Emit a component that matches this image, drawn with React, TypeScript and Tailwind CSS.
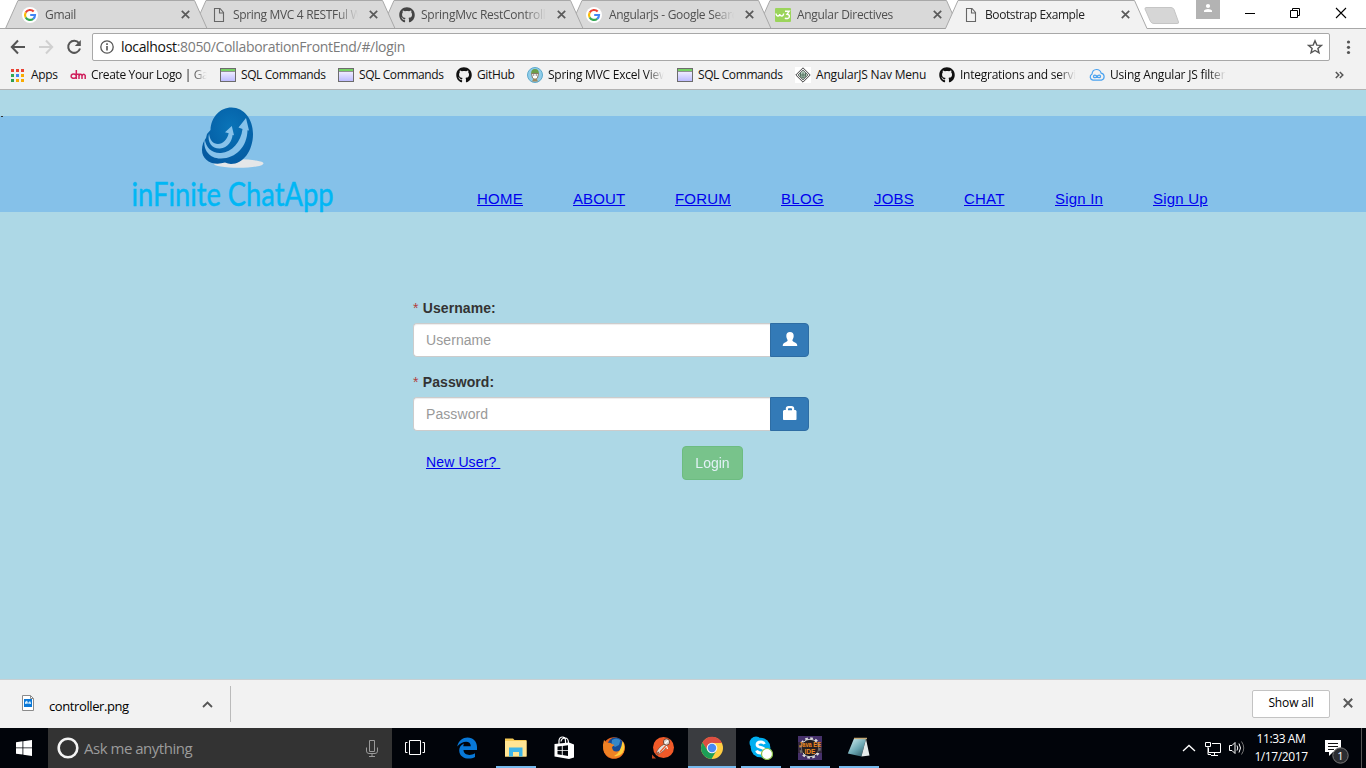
import React from "react";
import { FaGithub } from "react-icons/fa";

const ui = "font-['Open_Sans','Noto_Sans',sans-serif]";

function GoogleIcon() {
  return (
    <svg width="16" height="16" viewBox="0 0 16 16" className="block">
      <circle cx="8" cy="8" r="8" fill="#fff" />
      <g fill="none" strokeWidth="2.2">
        <path d="M11.7 4.6A5 5 0 0 0 3.7 5.5" stroke="#ea4335" />
        <path d="M3.7 5.5A5 5 0 0 0 3.7 10.5" stroke="#fbbc05" />
        <path d="M3.7 10.5A5 5 0 0 0 11.2 11.8" stroke="#34a853" />
        <path d="M11.2 11.8A5 5 0 0 0 13 8H8.2" stroke="#4285f4" />
      </g>
    </svg>
  );
}

function PageIcon() {
  return (
    <svg width="16" height="16" viewBox="0 0 16 16" className="block">
      <path d="M4.5 1.5H10L13.5 5.5V14.5H4.500Z M9.5 1.5V6H13.5" fill="none" stroke="#666" strokeWidth="1.1" />
    </svg>
  );
}

function W3Icon() {
  return (
    <svg width="16" height="16" viewBox="0 0 16 16" className="ml-px block">
      <rect y="1" width="16" height="14" rx="1" fill="#9bd45b" />
      <path d="M1 6.500Q1.300 9 3 9T4.700 7Q5 9 6.700 9T8.600 6.500M10 4.300H14.200L12 7.200Q14.800 7.400 14.300 9.800T9.800 11.200" fill="none" stroke="#fff" strokeWidth="1.400" />
    </svg>
  );
}

function CloseIcon() {
  return (
    <svg width="9" height="9" viewBox="0 0 9 9" className="block">
      <path d="M.8.8L8.2 8.2M8.2.8L.8 8.2" stroke="#5a5a5a" strokeWidth="1.7" />
    </svg>
  );
}

function Tab({ icon, title, active, z, tracking }: { icon: React.ReactNode; title: string; active?: boolean; z: string; tracking: string }) {
  return (
    <div className={`relative h-[29px] w-[188px] shrink-0 ${z}`}>
      <svg width="202" height="29" viewBox="0 0 202 29" className="absolute left-0 top-0 overflow-visible">
        <path d="M-.5 28.5L12 .5H188.5L201 28.5" fill={active ? "#f2f2f2" : "#d9d9d9"} stroke="#a8a8a8" />
        {active ? <path d="M0 28.5H200.5" stroke="#f2f2f2" strokeWidth="1.2" /> : <path d="M-.5 28.5H201" stroke="#a0a0a0" />}
      </svg>
      <div className="relative flex h-[29px] items-center pl-4">
        <div className="w-[17px] shrink-0">{icon}</div>
        <div className={`ml-[6px] w-[129px] shrink-0 overflow-hidden whitespace-pre text-[12px] leading-[18px] [mask-image:linear-gradient(to_right,black_80%,transparent_97%)] ${tracking} ${active ? "text-[#222]" : "text-[#505050]"}`}>
          {title}
        </div>
        <div className="ml-[6.500px] shrink-0"><CloseIcon /></div>
      </div>
    </div>
  );
}

function SqlIcon() {
  return (
    <svg width="16" height="16" viewBox="0 0 16 16" className="block">
      <defs>
        <linearGradient id="sql" x2="0" y2="1"><stop stopColor="#fff" /><stop offset="1" stopColor="#bbb9ff" /></linearGradient>
      </defs>
      <rect x=".5" y="1.5" width="15" height="13" fill="url(#sql)" stroke="#6c6c6c" />
      <path d="M1 3H15" stroke="#55c83c" strokeWidth="1.6" />
      <path d="M1 4.5H15" stroke="#777" strokeWidth=".8" />
    </svg>
  );
}

function AppsIcon() {
  const c = ["#ea4335", "#ea4335", "#ea4335", "#34a853", "#4285f4", "#f9ab00", "#2e9e50", "#f9ab00", "#f9ab00"];
  return (
    <svg width="15" height="15" viewBox="0 0 15 15" className="block">
      {c.map((f, i) => <rect key={i} x={1 + (i % 3) * 5} y={1 + Math.floor(i / 3) * 5} width="3" height="3" fill={f} />)}
    </svg>
  );
}

function DmIcon() {
  return (
    <svg width="16" height="16" viewBox="0 0 16 16" className="block">
      <path d="M6.300 3V12M6.300 9.300A2.600 2.200 0 1 1 6.300 9M6.300 7.300H9V12M9 8.800Q10.500 6 12 8.300V12M12 8.800Q13.800 6 15.200 8.500V12" fill="none" stroke="#cf1f5c" strokeWidth="1.500" />
    </svg>
  );
}

function SpringIcon() {
  return (
    <svg width="16" height="16" viewBox="0 0 16 16" className="block">
      <circle cx="8" cy="8" r="7.5" fill="#8fcdea" stroke="#5ca9cc" />
      <path d="M4 7Q4 2 8 2T12 7Z" fill="#6b9f4a" />
      <path d="M4.5 6.5H11.5L10.5 11L8 13L5.5 11Z" fill="#fff" stroke="#887a65" />
      <path d="M5 14.5L6.5 11.5H9.5L11 14.5Z" fill="#a08a5f" />
      <path d="M6 8H7.3M8.7 8H10" stroke="#555" />
    </svg>
  );
}

function DiamondIcon() {
  return (
    <svg width="16" height="16" viewBox="0 0 16 16" className="block">
      <rect width="16" height="16" fill="#fff" />
      <path d="M8 .8L15.2 8L8 15.2L.8 8Z" fill="#eee" stroke="#444" strokeWidth="1" />
      <path d="M8 3L13 8L8 13L3 8Z" fill="#b4cdbd" stroke="#555" strokeWidth=".8" />
      <path d="M5.500 6V9.500L8 11L10.500 9.500V6M8 5.500V10M5.500 8H10.500" fill="none" stroke="#4d6a58" strokeWidth=".9" />
    </svg>
  );
}

function CloudIcon() {
  return (
    <svg width="16" height="16" viewBox="0 0 16 16" className="block">
      <path d="M4 13.2A3.3 3.3 0 0 1 3 7Q3.5 2.7 7.5 2.5Q11 2.4 12.2 6.2A3.6 3.6 0 0 1 12.5 13.2Z" fill="none" stroke="#4ba3f0" strokeWidth="1.2" />
      <path d="M8 9.4C6.8 7.6 4.5 7.8 4.5 9.4S6.8 11.2 8 9.4S11.5 7.8 11.5 9.4S9.2 11.2 8 9.4Z" fill="none" stroke="#4ba3f0" strokeWidth="1.3" />
    </svg>
  );
}

function Bookmark({ icon, label, width, fade, gap = "ml-[5px]", tracking }: { icon: React.ReactNode; label: string; width: string; fade?: boolean; gap?: string; tracking: string }) {
  return (
    <div className={`flex shrink-0 items-center ${width}`}>
      <div className="shrink-0">{icon}</div>
      <div className={`${gap} whitespace-pre text-[12px] leading-[18px] text-[#111] ${tracking} ${fade ? "w-[117px] overflow-hidden [mask-image:linear-gradient(to_right,black_84%,transparent_99%)]" : ""}`}>{label}</div>
    </div>
  );
}

function WindowControls() {
  return (
    <svg width="170" height="28" viewBox="1196 0 170 28" className="block" fill="none">
      <rect x="1196" width="24" height="19" fill="#b3b3b3" />
      <circle cx="1208" cy="6" r="2.1" fill="#fff" />
      <path d="M1204 12V10.6Q1205 9 1208 9T1212 10.6V12Z" fill="#fff" />
      <path d="M1245 13.5H1255M1290.5 10.5H1297.5V17.5H1290.5ZM1292.5 10.5V8.5H1299.5V15.5H1297.5" stroke="#000" />
      <path d="M1336 8L1346 18M1346 8L1336 18" stroke="#000" strokeWidth="1.1" />
    </svg>
  );
}

function Browser() {
  return (
    <div className="flex h-[90px] flex-col bg-[#f2f2f2]">
      <div className="flex h-[29px] border-b border-[#a8a8a8] bg-white pl-1.5">
        <Tab z="z-[5]" icon={<GoogleIcon />} title="Gmail" tracking="ml-[5px] tracking-[-0.3px]" />
        <Tab z="z-[4]" icon={<PageIcon />} title="Spring MVC 4 RESTFul Web" tracking="tracking-[-0.33px]" />
        <Tab z="z-[3]" icon={<FaGithub size={16} color="#444" className="ml-px" />} title="SpringMvc RestController" tracking="tracking-[-0.25px]" />
        <Tab z="z-[2]" icon={<GoogleIcon />} title="Angularjs - Google Search" tracking="tracking-[-0.3px]" />
        <Tab z="z-[1]" icon={<W3Icon />} title="Angular Directives" tracking="tracking-[-0.3px]" />
        <Tab z="z-[6]" icon={<PageIcon />} title="Bootstrap Example" active tracking="tracking-[-0.4px]" />
        <svg width="37" height="28" viewBox="0 0 37 28" className="ml-[10px] block shrink-0">
          <path d="M2 7.5H27Q29 7.5 30 9.5L34.5 22Q35 23.5 33 23.5H10Q7.5 23.5 6.5 21.5L1 9Q1 7.5 2 7.5Z" fill="#d6d6d6" stroke="#c5c5c5" />
        </svg>
        <div className="ml-auto shrink-0"><WindowControls /></div>
      </div>
      <div className="flex h-8 items-start">
        <svg width="92" height="32" viewBox="0 29 92 32" fill="none" strokeWidth="2" className="block shrink-0">
          <path d="M25 47H12M18 40.5L11.8 47L18 53.5" stroke="#555" />
          <path d="M39 47H52M46 40.5L52.2 47L46 53.5" stroke="#d0d0d0" />
          <path d="M79 43.2A6 6 0 1 0 80 48.5" stroke="#555" />
          <path d="M80.8 40V46H74.8Z" fill="#555" />
        </svg>
        <div className="mt-1 flex h-7 w-[1238px] shrink-0 items-center rounded-[2px] border border-[#a8a8a8] bg-white">
          <svg width="14" height="14" viewBox="0 0 14 14" className="ml-[7px] shrink-0">
            <circle cx="7" cy="7" r="6.2" fill="none" stroke="#555" strokeWidth="1.3" />
            <path d="M7 6V10.5M7 3.3V5" stroke="#555" strokeWidth="1.6" />
          </svg>
          <div className="ml-[7px] grow whitespace-pre text-[14px] leading-5 tracking-[-0.33px] text-[#7b7b7b]"><span className="text-[#111]">localhost</span>:8050/CollaborationFrontEnd/#/login</div>
          <svg width="16" height="16" viewBox="0 0 16 16" className="mr-[6px] shrink-0">
            <path d="M8 1.8L9.8 6.1L14.4 6.4L10.9 9.4L12 13.9L8 11.5L4 13.9L5.1 9.4L1.6 6.4L6.2 6.1Z" fill="none" stroke="#555" strokeWidth="1.4" />
          </svg>
        </div>
        <svg width="36" height="32" viewBox="1330 29 36 32" fill="#555" className="block">
          <circle cx="1348.5" cy="42" r="1.6" /><circle cx="1348.5" cy="47.3" r="1.6" /><circle cx="1348.5" cy="52.5" r="1.6" />
        </svg>
      </div>
      <div className="flex h-[29px] items-center border-b border-[#b3b3b3] pl-2.5">
        <Bookmark width="w-[60px]" icon={<AppsIcon />} label="Apps" gap="ml-1.5" tracking="tracking-[-0.3px]" />
        <Bookmark width="w-[150px]" icon={<DmIcon />} label="Create Your Logo | Gallery" fade tracking="tracking-[-0.35px]" />
        <Bookmark width="w-[118px]" icon={<SqlIcon />} label="SQL Commands" tracking="tracking-[-0.4px]" />
        <Bookmark width="w-[118px]" icon={<SqlIcon />} label="SQL Commands" tracking="tracking-[-0.4px]" />
        <Bookmark width="w-[71px]" icon={<FaGithub size={16} color="#111" />} label="GitHub" tracking="tracking-[-0.35px]" />
        <Bookmark width="w-[150px]" icon={<SpringIcon />} label="Spring MVC Excel View" fade tracking="tracking-[-0.25px]" />
        <Bookmark width="w-[118px]" icon={<SqlIcon />} label="SQL Commands" tracking="tracking-[-0.4px]" />
        <Bookmark width="w-[144px]" icon={<DiamondIcon />} label="AngularJS Nav Menu" tracking="tracking-[-0.18px]" />
        <Bookmark width="w-[150px]" icon={<FaGithub size={16} color="#111" />} label="Integrations and services" fade tracking="tracking-[-0.25px]" />
        <Bookmark width="w-[150px]" icon={<CloudIcon />} label="Using Angular JS filters" fade tracking="tracking-[-0.2px]" />
        <svg width="9" height="8" viewBox="0 0 9 8" className="ml-[96px]">
          <path d="M.8 1L3.8 4L.8 7M4.8 1L7.8 4L4.8 7" fill="none" stroke="#555" strokeWidth="1.5" />
        </svg>
      </div>
    </div>
  );
}

function Logo() {
  return (
    <svg width="210" height="110" viewBox="130 104 210 110" className="-mt-3 block shrink-0">
      <defs>
        <radialGradient id="egg" cx=".55" cy=".35" r=".7"><stop stopColor="#0a74b8" /><stop offset=".5" stopColor="#0666ac" /><stop offset="1" stopColor="#0459a0" /></radialGradient>
      </defs>
      <ellipse cx="238.500" cy="163.500" rx="25" ry="4.300" fill="#e4e6e8" />
      <path d="M231.500 107.500C244 107.500 253 119 253 134C253 151 243 164 231 164C229 164 227 163.300 225 162.600C212 166.500 202 160 202 150C202 145 203.500 141 206 138L207 134L210.500 130C211 117 220 107.500 231.500 107.500Z" fill="url(#egg)" />
      <path d="M204.700 139C202.500 150 210 158.800 221 158.500C236 158 247 147 247.500 130.200L249 130.600L246 118L238.500 127.500L242.500 129C241 142 232 152 221 153C212 153.500 206 148 204.700 139Z" fill="#87c2ea" />
      <path d="M209 133.500C207 143 212.500 149 220 148.600C228 148 232 141 232.600 135L234 135.300L231.800 126L225 132.200L228.700 133.300C227 140 223 144 218 144C213 144 209.800 140 209 133.500Z" fill="#87c2ea" />
      <text x="131.500" y="205.500" textLength="202" lengthAdjust="spacingAndGlyphs" fontFamily="Lato, sans-serif" fontSize="33.500" fill="#00b7f5" stroke="#00b7f5" strokeWidth=".5">inFinite ChatApp</text>
    </svg>
  );
}

const links: [string, string][] = [
  ["HOME", "w-[46px] tracking-[0.25px]"], ["ABOUT", "w-[52px] tracking-[0.1px]"], ["FORUM", "w-[56px] tracking-[0.2px]"], ["BLOG", "w-[43px] tracking-[0.3px]"],
  ["JOBS", "w-10 tracking-[0.2px]"], ["CHAT", "w-[41px] tracking-[0.2px]"], ["Sign In", "w-12 tracking-[0.2px]"], ["Sign Up", "w-[55px] tracking-[0.2px]"],
];

function Field({ label, children }: { label: string; children: React.ReactNode }) {
  return (
    <div className="mb-[15px] w-[396px]">
      <div className="mb-[5px] flex text-sm leading-5"><span className="w-[9.800px] text-[#b3403d]">*</span><span className="font-bold tracking-[0.06px] text-[#333]">{label}:</span></div>
      <div className="flex h-[34px]">
        <input placeholder={label} className="w-[357px] rounded-l border border-r-0 border-[#ccc] bg-white px-3 text-sm tracking-[0.08px] text-[#555] shadow-[inset_0_1px_1px_rgba(0,0,0,0.075)] outline-none placeholder:text-[#999]" />
        <button className="flex w-[39px] items-center justify-center rounded-r border border-[#2e6da4] bg-[#337ab7]">{children}</button>
      </div>
    </div>
  );
}

function Page() {
  return (
    <main className="flex h-[589px] flex-col bg-[#add8e6] font-['Liberation_Sans',Arial,sans-serif]">
      <div className="h-[26px]" />
      <nav className="relative flex h-24 shrink-0 bg-[#85c1e9] pl-[130px]">
        <span className="absolute left-px top-0 h-px w-[2px] bg-[#333]" />
        <Logo />
        <div className="ml-[137px] flex gap-[50px] pt-[74px]">
          {links.map(([t, c]) => <a key={t} className={`block h-5 whitespace-nowrap text-[15px] leading-[18px] text-[#0000ee] underline ${c}`}>{t}</a>)}
        </div>
      </nav>
      <form className="ml-[413px] mt-[86px] flex flex-col">
        <Field label="Username">
          <svg width="16" height="16" viewBox="0 0 16 16" className="mb-0.5">
            <path d="M8 1C10.400 1 11.800 2.400 11.700 5C11.600 7.300 10.700 8.200 10.400 9.100C10.300 10 10.700 10.400 12 11C14.300 12 15.200 12.700 15.300 15H.7C.8 12.700 1.700 12 4 11C5.300 10.400 5.700 10 5.600 9.100C5.300 8.200 4.400 7.300 4.300 5C4.200 2.400 5.600 1 8 1Z" fill="#fff" />
          </svg>
        </Field>
        <Field label="Password">
          <svg width="14" height="14" viewBox="0 0 14 14" className="mb-[3px]">
            <path d="M2.800 4V2.600Q2.800 0 5.500 0H8.500Q11.200 0 11.200 2.600V4H12.500L13.500 5V13.200Q13.500 14 12.700 14H.8Q0 14 0 13.200V5L1 4ZM5 4.200H9V3Q9 2.300 8.200 2.300H5.800Q5 2.300 5 3Z" fill="#fff" />
          </svg>
        </Field>
        <div className="flex">
          <a className="ml-[13px] mt-1.5 h-5 w-[256px] whitespace-pre text-sm leading-5 text-[#0000ee]"><span className="tracking-[0.12px] underline">New User? </span></a>
          <button className="h-[34px] w-[61px] rounded border border-[#4cae4c] bg-[#5cb85c] text-sm text-white opacity-65">Login</button>
        </div>
      </form>
    </main>
  );
}

function Downloads() {
  return (
    <div className="flex h-[49px] items-center border-t border-[#c8d0d3] bg-[#f2f2f2]">
      <div className="ml-[22px] flex h-9 w-[209px] items-center border-r border-[#bbb]">
        <svg width="12" height="17" viewBox="0 0 12 17" className="-mt-0.5 shrink-0">
          <path d="M.5.5H8.500L11.500 3.500V15.500H.5Z" fill="#fff" stroke="#8b8b8b" /><path d="M8.500.5V3.500H11.500" fill="none" stroke="#8b8b8b" />
          <rect x="2" y="4" width="8" height="8" fill="#0b78d7" /><path d="M3 7L5 5.500L6 8L8 6L9 8V9L6 8.500L3 9Z" fill="#d5eeff" />
        </svg>
        <div className="ml-[15px] mt-1 w-[152.500px] text-[13px] leading-5 tracking-[-0.4px] text-black">controller.png</div>
        <svg width="11" height="7" viewBox="0 0 11 7"><path d="M1 6L5.500 1.500L10 6" fill="none" stroke="#555" strokeWidth="1.800" /></svg>
      </div>
      <button className="ml-auto h-7 w-[78px] rounded-[2px] border border-[#c3c3c3] bg-white pb-0.5 text-[12px] tracking-[-0.15px] text-black">Show all</button>
      <div className="-mt-0.5 ml-[13px] mr-[13px]"><svg width="10" height="10" viewBox="0 0 10 10"><path d="M.8.8L9.200 9.200M9.200.8L.8 9.200" stroke="#5a5a5a" strokeWidth="2" /></svg></div>
    </div>
  );
}

function Slot({ children, on, active }: { children: React.ReactNode; on?: boolean; active?: boolean }) {
  return (
    <div className="flex w-[49px] shrink-0 justify-center">
      <div className={`flex h-10 shrink-0 flex-col items-center justify-between ${active ? "w-12 bg-[#3a3c40]" : "w-10"}`}>
        <div className="flex h-[38px] items-center pt-0.5"><svg width="24" height="24" viewBox="0 0 24 24" className="block">{children}</svg></div>
        <div className={`h-0.5 w-full ${on ? "bg-[#76b9ed]" : ""}`} />
      </div>
    </div>
  );
}

function Taskbar() {
  return (
    <div className="flex h-10 items-stretch bg-[#01040a]">
      <div className="flex w-12 items-center justify-center">
        <svg width="16" height="16" viewBox="0 0 16 16" fill="#fff"><path d="M0 2.300L6.500 1.300V7.500H0ZM7.300 1.200L16 0V7.500H7.300ZM0 8.300H6.500V14.600L0 13.700ZM7.300 8.300H16V16L7.300 14.800Z" /></svg>
      </div>
      <div className="flex w-[344px] items-center bg-[#333]">
        <svg width="22" height="22" viewBox="0 0 22 22" className="ml-[9px]"><circle cx="11" cy="11" r="9.300" fill="none" stroke="#f3f3f3" strokeWidth="2.600" /></svg>
        <div className="ml-[5px] w-[281px] text-[15px] leading-5 tracking-[-0.48px] text-[#9b9b9b]">Ask me anything</div>
        <svg width="12" height="17" viewBox="0 0 12 17" fill="none" stroke="#999" className="ml-px"><path d="M3.500.5H8.500V11.500H3.500ZM.5 7.500V11Q.5 13.500 3 13.500H9Q11.500 13.500 11.500 11V7.500M6 13.500V16M3 16.500H9" /></svg>
      </div>
      <div className="flex">
        <div className="flex w-[50px] items-center justify-center">
          <svg width="22" height="24" viewBox="0 0 22 24" fill="none" stroke="#fff" className="mr-1"><path d="M5.500 4.500H16.500V18.500H5.500ZM3.500 6.500H1.500V16.500H3.500M18.500 6.500H20.500V16.500H18.500" /></svg>
        </div>
        <Slot>
          <path d="M2.200 10.500C3.500 4.500 8 1.500 12.500 1.500C18 1.500 22 5.500 22 11V14H8.500C8.800 19.500 15.500 20 20 17.300V21C14 24.500 4.200 22.300 4.200 14.200C4.200 11.500 6 8.800 9 7.500C8.500 8.500 8.300 9.300 8.300 10.200H15.800C15.800 3.800 7 4.500 2.200 10.500Z" fill="#0878d7" />
        </Slot>
        <Slot on>
          <path d="M1 2.500H9L10.500 4H22.500V20.500H1Z" fill="#f5ca57" /><path d="M1 5H22.500V20.500H1Z" fill="#ffe594" /><path d="M5 20.500V11.500H18.500V20.500H15V16H9V20.500Z" fill="#3db5e8" />
        </Slot>
        <Slot>
          <path d="M1.500 8L16 6.500L21 8.500V21.500L16 23L1.500 20.500Z" fill="#fff" /><path d="M6 8V4.500Q6.500 1 9.500 1T12.500 5V7M8 5.500Q8.500 2 12 2T15.500 7" fill="none" stroke="#fff" strokeWidth="1.200" />
          <path d="M4.500 10.500L8.800 10V14.200H4.500ZM9.700 9.900L15 9.300V14.200H9.700ZM4.500 15.100H8.800V19L4.500 18.300ZM9.700 15.100H15V20L9.700 19.100Z" fill="#03060b" />
        </Slot>
        <Slot>
          <circle cx="12" cy="12" r="10.800" fill="#e9641c" /><circle cx="13.500" cy="9.500" r="8" fill="#164a94" /><path d="M10 4Q14 1 18.500 4L17 9L13 11L9.500 8Z" fill="#3587c8" />
          <path d="M2 4L5 7Q8 6 10 8L12.500 9L10 11Q10.500 16 15 15.500Q20 15 21.500 5.500Q24 11 21.800 16A10.800 10.800 0 0 1 1.300 13Q.3 9 2 4Z" fill="#ef8124" />
          <path d="M20.500 5Q24 11 20.500 17Q17 21 12 20Q19 17 20.500 5Z" fill="#ffce3c" />
        </Slot>
        <Slot>
          <circle cx="12.500" cy="11.500" r="10.500" fill="#f15a29" /><path d="M1 18.500L5 22.500H1Z" fill="#c44a22" />
          <path d="M13.500 8L16 10.500Q14 15 6.500 19L8 16L5 17.500Q7 11 13.500 8Z" fill="#e5e0dc" stroke="#80402a" strokeWidth=".7" /><path d="M14.500 10L9 16" stroke="#f15a29" strokeWidth="1.200" />
          <circle cx="15.500" cy="6" r="3.200" fill="#d9cfc9" stroke="#6c3c2a" strokeWidth=".9" /><path d="M14 7.500L17 4.500M15.500 10L16.500 13" stroke="#fff" strokeWidth="1.100" />
        </Slot>
        <Slot on active>
          <circle cx="12" cy="12" r="11" fill="#ffcd42" /><path d="M12 7H22A11 11 0 0 0 2.500 6.500L8 15.500Z" fill="#dd4f42" /><path d="M2.500 6.500A11 11 0 0 0 11.500 23L16.500 14.500L8 15Z" fill="#1c9e57" />
          <circle cx="12" cy="12" r="5.300" fill="#f4f4f4" /><circle cx="12" cy="12" r="4.200" fill="#4889f4" />
        </Slot>
        <Slot on>
          <circle cx="7" cy="7" r="6.500" fill="#00aff0" /><circle cx="16" cy="16" r="6.500" fill="#00aff0" /><circle cx="11.500" cy="11.500" r="9.800" fill="#00aff0" />
          <path d="M15.500 8Q14.500 5.800 11.500 6Q8 6.200 8 8.700C8 12.200 15.500 10.500 15.500 14.200Q15.200 17 11.800 17Q8.300 17 7.600 14.500" fill="none" stroke="#fff" strokeWidth="2.800" />
          <circle cx="18" cy="18" r="5.500" fill="#fff" stroke="#8bc34a" strokeWidth="1.200" />
        </Slot>
        <Slot on>
          <rect width="24" height="24" fill="#46316b" /><circle cx="12" cy="12" r="9.500" fill="#18161e" stroke="#ddd" strokeWidth="2.500" strokeDasharray="2.600 2.370" /><circle cx="12" cy="12" r="8.700" fill="#1c1a22" stroke="#d7d7d7" />
          <rect y="6" width="24" height="11" fill="#2b221f" opacity=".6" />
          <text x="1" y="11.200" textLength="22" lengthAdjust="spacingAndGlyphs" fontFamily="Liberation Sans" fontSize="7" fontWeight="bold" fill="#ef8a22">Java EE</text><text x="6.500" y="17.500" textLength="11" lengthAdjust="spacingAndGlyphs" fontFamily="Liberation Sans" fontSize="7" fontWeight="bold" fill="#ef8a22">IDE</text>
        </Slot>
        <Slot on>
          <defs><linearGradient id="note" x2=".8" y2="1"><stop stopColor="#d9f4f5" /><stop offset=".6" stopColor="#6ba7b3" /><stop offset="1" stopColor="#315d68" /></linearGradient></defs>
          <path d="M7 2.500L19 2.500L14.500 20.500L.8 17.500Z" fill="url(#note)" /><path d="M19 3L22.500 19.500L14.500 20.500Z" fill="#e4ebeb" /><path d="M7 2.300L20 2.500" stroke="#c4a875" strokeWidth="1.300" />
        </Slot>
      </div>
      <svg width="72" height="40" viewBox="1180 728 72 40" className="ml-auto block shrink-0" fill="none" stroke="#fff">
        <path d="M1183 751L1189 745.500L1195 751" strokeWidth="1.300" />
        <path d="M1212 743.500H1220.500V752.500H1208.500V748M1214.500 753V755M1211 755.500H1218M1205.500 742.500H1210.500V746.500H1205.500ZM1208 747V754.500H1211" />
        <path d="M1229.500 745.500H1232L1235 742.500V753.500L1232 750.500H1229.500Z" /><path d="M1237 745.500Q1238.500 748 1237 750.500M1239 743.500Q1242 748 1239 752.500" /><path d="M1241.500 741.500Q1246 748 1241.500 754.500" stroke="#777" />
      </svg>
      <div className="flex w-[58px] shrink-0 flex-col items-center pt-0.5 text-[12px] leading-[18px] tracking-[-0.4px] text-white"><span>11:33 AM</span><span className="whitespace-nowrap">1/17/2017</span></div>
      <svg width="56" height="40" viewBox="1310 728 56 40" className="block shrink-0">
        <path d="M1325 740H1341V752H1333L1329 756V752H1325Z" fill="#fff" /><path d="M1328 743.500H1338M1328 746.500H1338M1328 749.500H1334" stroke="#111" />
        <circle cx="1340.500" cy="755.500" r="7.700" fill="#2b2d31" stroke="#777" /><text x="1340.500" y="759.500" textAnchor="middle" fontFamily="Open Sans" fontSize="11" fill="#fff">1</text>
        <path d="M1361.500 728V768" stroke="#555" />
      </svg>
    </div>
  );
}

export default function App() {
  return (
    <div className={`h-[768px] w-[1366px] overflow-hidden ${ui}`}>
      <Browser />
      <Page />
      <Downloads />
      <Taskbar />
    </div>
  );
}
